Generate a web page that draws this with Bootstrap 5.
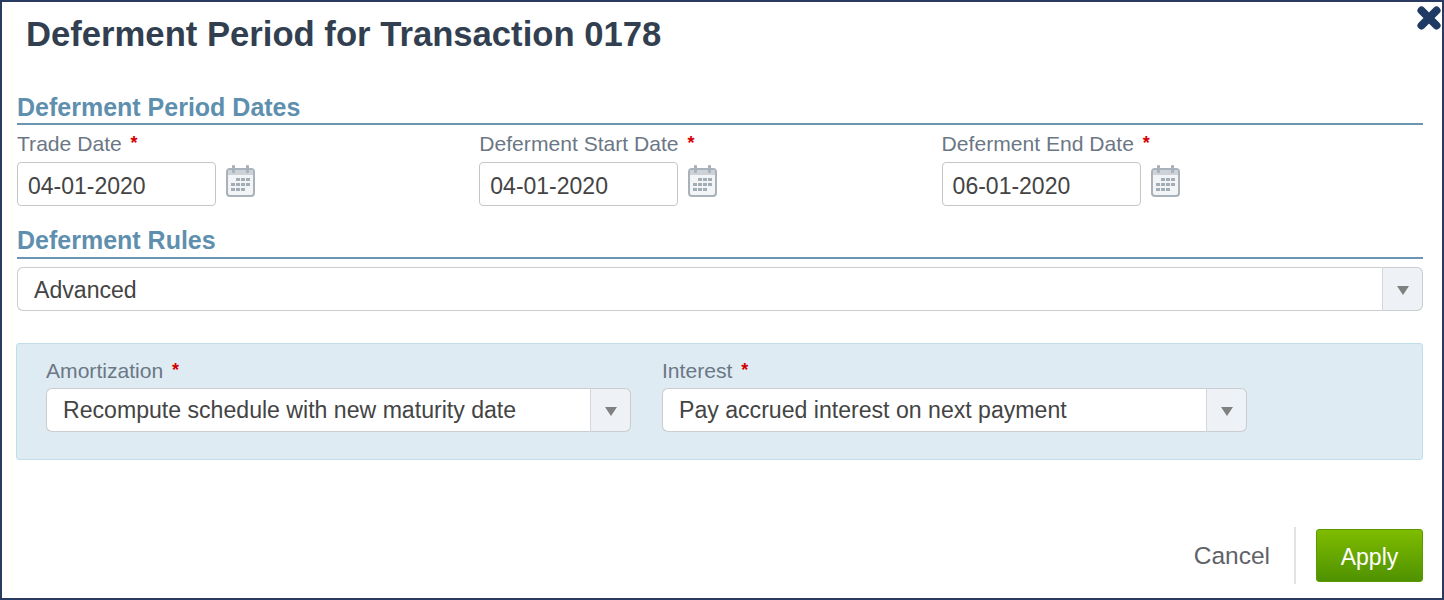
<!DOCTYPE html>
<html lang="en">
<head>
  <meta charset="UTF-8">
  <meta name="viewport" content="width=device-width, initial-scale=1.0">
  <title>Deferment Period</title>
  <link href="https://cdn.jsdelivr.net/npm/bootstrap@5.3.0/dist/css/bootstrap.min.css" rel="stylesheet">
  <style>
    html, body { height: 600px; overflow: hidden; background: #fff; }
    body { font-family: "Liberation Sans", Arial, sans-serif; }
    .dialog-box { height: 600px; border: 2px solid #2a3b63; padding: 0 19px 0 15px; position: relative; }
    .dialog-title { font-size: 34.65px; font-weight: 700; color: #323f50; margin: 0 0 0 9px; padding-top: 13px; line-height: 38px; height: 92px; }
    .close-x { position: absolute; top: 3px; right: 0; width: 26px; height: 26px; display: block; }
    .section-head { font-size: 25px; font-weight: 700; color: #5f8fae; line-height: 26px; border-bottom: 2px solid #6a96b2; margin: 0; padding-bottom: 3px; height: 31px; }
    .section-rules { margin-top: 22px; line-height: 24px; }
    .dates-row { padding-top: 6px; }
    .date-field { width: 462.3px; }
    .field-label { font-size: 21.1px; line-height: 24px; color: #6b7785; margin: 0 0 6px; display: block; }
    .req { color: #d40000; font-weight: 700; font-size: 18px; margin-left: 3px; vertical-align: 2px; }
    .date-input.form-control { width: 199px; height: 44px; flex: none; font-size: 23px; color: #444; padding: 4px 10px 0; border: 1px solid #c6c6c6; border-radius: 4px; box-shadow: none; }
    .cal-icon { margin: 2px 0 0 9px; }
    .combo .form-control { height: 44px; font-size: 23.1px; color: #444; padding: 0 16px; border: 1px solid #c9cdcf; border-right: 1px solid #d4d7d9; border-radius: 6px 0 0 6px; background: #fff; box-shadow: none; }
    .combo-main .form-control { padding-top: 2px; }
    .combo .input-group-text { width: 40px; height: 44px; justify-content: center; padding: 0; background: #eef1f5; border: 1px solid #c9cdcf; border-left: 0; border-radius: 0 6px 6px 0; margin-left: 0 !important; }
    .arrow-down { width: 0; height: 0; border-left: 6px solid transparent; border-right: 6px solid transparent; border-top: 9px solid #808080; margin-top: 3px; }
    .rules-panel { background: #deebf3; border: 1px solid #bfdfe8; border-radius: 3px; height: 117px; padding: 14px 29px; margin: 32px 0 0 -1px; gap: 31px; }
    .panel-field { width: 585px; }
    .panel-field .field-label { margin-bottom: 5px; }
    .dialog-foot { margin-top: 67px; height: 57px; }
    .cancel-link { font-size: 24.5px; color: #5f6368; text-decoration: none; margin-right: 24px; padding-top: 2px; }
    .foot-sep { width: 2px; height: 57px; background: #e3e3e3; margin-right: 20px; }
    .apply-btn.btn { width: 107px; height: 53px; font-size: 23px; color: #fff; padding: 3px 0 0; border: 1px solid #5a9a00; border-radius: 3px; background: linear-gradient(#7fbc00, #4f9200); }
  </style>
</head>
<body>
  <div class="dialog-box">
    <svg class="close-x" viewBox="0 0 26 26"><path d="M5.5 5.5 20.5 20.5M20.5 5.5 5.5 20.5" stroke="#1f3a63" stroke-width="8" stroke-linecap="round"/></svg>
    <h1 class="dialog-title">Deferment Period for Transaction 0178</h1>

    <h2 class="section-head">Deferment Period Dates</h2>
    <div class="d-flex dates-row">
      <div class="date-field">
        <label class="field-label">Trade Date <span class="req">*</span></label>
        <div class="d-flex align-items-start">
          <input class="form-control date-input" value="04-01-2020">
          <svg class="cal-icon" width="32" height="34" viewBox="0 0 32 34"><use href="#cal"/></svg>
        </div>
      </div>
      <div class="date-field">
        <label class="field-label">Deferment Start Date <span class="req">*</span></label>
        <div class="d-flex align-items-start">
          <input class="form-control date-input" value="04-01-2020">
          <svg class="cal-icon" width="32" height="34" viewBox="0 0 32 34"><use href="#cal"/></svg>
        </div>
      </div>
      <div class="date-field">
        <label class="field-label">Deferment End Date <span class="req">*</span></label>
        <div class="d-flex align-items-start">
          <input class="form-control date-input" value="06-01-2020">
          <svg class="cal-icon" width="32" height="34" viewBox="0 0 32 34"><use href="#cal"/></svg>
        </div>
      </div>
    </div>

    <h2 class="section-head section-rules">Deferment Rules</h2>
    <div class="input-group combo combo-main mt-2">
      <input class="form-control" value="Advanced">
      <span class="input-group-text"><span class="arrow-down"></span></span>
    </div>

    <div class="rules-panel d-flex">
      <div class="panel-field">
        <label class="field-label">Amortization <span class="req">*</span></label>
        <div class="input-group combo">
          <input class="form-control" value="Recompute schedule with new maturity date">
          <span class="input-group-text"><span class="arrow-down"></span></span>
        </div>
      </div>
      <div class="panel-field">
        <label class="field-label">Interest <span class="req">*</span></label>
        <div class="input-group combo">
          <input class="form-control" value="Pay accrued interest on next payment">
          <span class="input-group-text"><span class="arrow-down"></span></span>
        </div>
      </div>
    </div>

    <div class="dialog-foot d-flex justify-content-end align-items-center">
      <a class="cancel-link" href="#">Cancel</a>
      <span class="foot-sep"></span>
      <button class="btn apply-btn" type="button">Apply</button>
    </div>
  </div>

  <svg width="0" height="0" class="d-block">
    <defs>
      <g id="cal">
        <rect x="2" y="5" width="27" height="27" rx="3" fill="#f2f4f6" stroke="#a9b2ba" stroke-width="2"/>
        <rect x="3" y="6" width="25" height="5" fill="#ccd2d7"/>
        <rect x="7" y="1" width="3" height="8" rx="1" fill="#a9b2ba"/>
        <rect x="21" y="1" width="3" height="8" rx="1" fill="#a9b2ba"/>
        <g fill="#a3adb6">
          <rect x="11" y="14" width="4" height="3"/><rect x="16" y="14" width="4" height="3"/><rect x="21" y="14" width="4" height="3"/>
          <rect x="6" y="19" width="4" height="3"/><rect x="11" y="19" width="4" height="3"/><rect x="16" y="19" width="4" height="3"/><rect x="21" y="19" width="4" height="3"/>
          <rect x="6" y="24" width="4" height="3"/><rect x="11" y="24" width="4" height="3"/><rect x="16" y="24" width="4" height="3"/>
        </g>
      </g>
    </defs>
  </svg>

  <script src="https://cdn.jsdelivr.net/npm/bootstrap@5.3.0/dist/js/bootstrap.bundle.min.js"></script>
</body>
</html>
